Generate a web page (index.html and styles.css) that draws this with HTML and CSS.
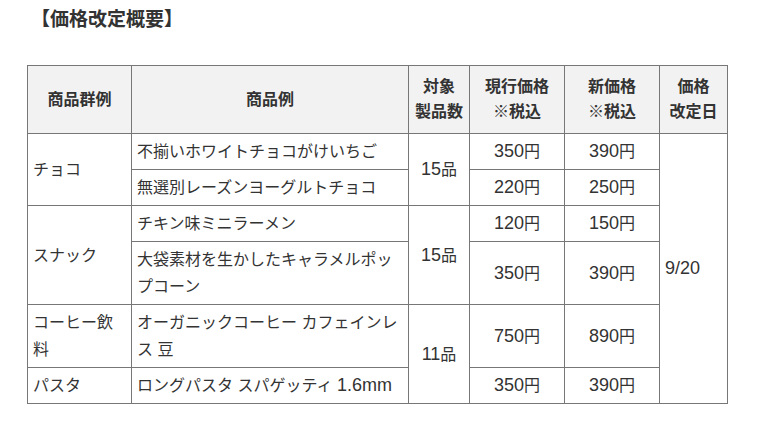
FILE: index.html
```html
<!DOCTYPE html>
<html lang="ja">
<head>
<meta charset="utf-8">
<title>価格改定概要</title>
<link rel="stylesheet" href="styles.css">
</head>
<body>
<div class="page">
  <h2 class="title">【価格改定概要】</h2>
  <table class="price-table">
    <colgroup>
      <col class="c-group">
      <col class="c-item">
      <col class="c-count">
      <col class="c-price">
      <col class="c-price">
      <col class="c-date">
    </colgroup>
    <thead>
      <tr>
        <th>商品群例</th>
        <th>商品例</th>
        <th>対象<br>製品数</th>
        <th>現行価格<br>※税込</th>
        <th>新価格<br>※税込</th>
        <th>価格<br>改定日</th>
      </tr>
    </thead>
    <tbody>
      <tr>
        <td rowspan="2">チョコ</td>
        <td>不揃いホワイトチョコがけいちご</td>
        <td rowspan="2" class="center"><span class="num">15</span>品</td>
        <td class="center"><span class="num">350</span>円</td>
        <td class="center"><span class="num">390</span>円</td>
        <td rowspan="6"><span class="num">9/20</span></td>
      </tr>
      <tr>
        <td>無選別レーズンヨーグルトチョコ</td>
        <td class="center"><span class="num">220</span>円</td>
        <td class="center"><span class="num">250</span>円</td>
      </tr>
      <tr>
        <td rowspan="2">スナック</td>
        <td>チキン味ミニラーメン</td>
        <td rowspan="2" class="center"><span class="num">15</span>品</td>
        <td class="center"><span class="num">120</span>円</td>
        <td class="center"><span class="num">150</span>円</td>
      </tr>
      <tr>
        <td>大袋素材を生かしたキャラメルポップコーン</td>
        <td class="center"><span class="num">350</span>円</td>
        <td class="center"><span class="num">390</span>円</td>
      </tr>
      <tr>
        <td>コーヒー飲料</td>
        <td>オーガニックコーヒー カフェインレス 豆</td>
        <td rowspan="2" class="center"><span class="num">11</span>品</td>
        <td class="center"><span class="num">750</span>円</td>
        <td class="center"><span class="num">890</span>円</td>
      </tr>
      <tr>
        <td>パスタ</td>
        <td>ロングパスタ スパゲッティ <span class="num">1.6mm</span></td>
        <td class="center"><span class="num">350</span>円</td>
        <td class="center"><span class="num">390</span>円</td>
      </tr>
    </tbody>
  </table>
</div>
</body>
</html>
```

FILE: styles.css
```css
html, body {
  margin: 0;
  padding: 0;
  background: #ffffff;
}

body {
  font-family: "Liberation Sans", "Noto Sans CJK JP", sans-serif;
  color: #333333;
}

.page {
  padding: 7px 0 0 27px;
}

.title {
  margin: 0 0 32px 4px;
  font-size: 19px;
  line-height: 26px;
  font-weight: bold;
  color: #333333;
}

.price-table {
  border-collapse: collapse;
  table-layout: fixed;
  width: 700px;
  font-size: 16px;
}

.c-group { width: 104px; }
.c-item { width: 277px; }
.c-count { width: 61px; }
.c-price { width: 95px; }
.c-date { width: 68px; }

.price-table th,
.price-table td {
  border: 1px solid #777777;
  padding: 4px 5px;
  line-height: 27px;
  vertical-align: middle;
  text-align: left;
}

.price-table th {
  background: #f2f2f2;
  font-weight: bold;
  text-align: center;
  line-height: 25px;
  padding: 8px 5px 9px;
}

.price-table td.center {
  text-align: center;
}

.num {
  font-size: 18px;
  line-height: 1;
}
```
